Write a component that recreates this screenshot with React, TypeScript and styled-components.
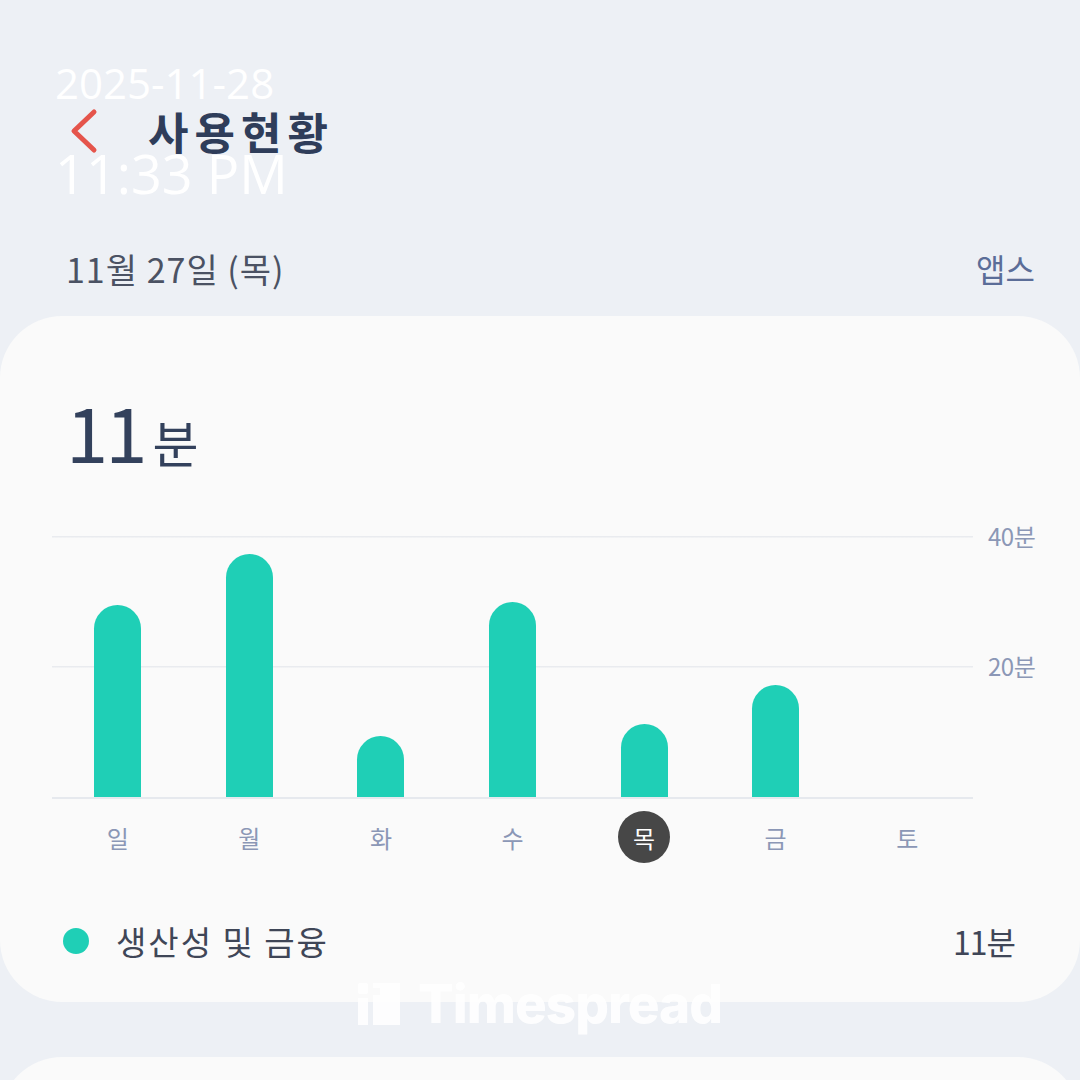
import React from 'react'
import styled, { createGlobalStyle } from 'styled-components'

const GlobalStyle = createGlobalStyle`
  html, body {
    margin: 0;
    padding: 0;
    background: #edf0f5;
  }
  body {
    font-family: "Noto Sans CJK KR", "Noto Sans", sans-serif;
  }
`

const Screen = styled.div`
  position: relative;
  width: 1080px;
  height: 1080px;
  overflow: hidden;
  background: #edf0f5;
`

const Stamp = styled.div`
  position: absolute;
  top: 62px;
  left: 55px;
  font-family: "Open Sans", sans-serif;
  color: #ffffff;
  line-height: 1;
  z-index: 2;
`

const StampLine = styled.div<{ $size: number; $gap?: number }>`
  font-size: ${p => p.$size}px;
  margin-top: ${p => p.$gap || 0}px;
`

const Header = styled.header`
  display: flex;
  align-items: center;
  height: 70px;
  margin-top: 96px;
  padding-left: 68px;
`

const Title = styled.h1`
  margin: 0 0 0 48px;
  font-size: 44px;
  font-weight: 700;
  color: #2f3d5a;
  letter-spacing: 6px;
`

const DateRow = styled.div`
  display: flex;
  align-items: center;
  justify-content: space-between;
  height: 50px;
  margin-top: 77px;
  padding: 0 45px 0 66px;
`

const DateText = styled.span`
  font-size: 34px;
  color: #4b5263;
  letter-spacing: 1px;
`

const AppsLink = styled.span`
  font-size: 32px;
  color: #5b6d98;
`

const Card = styled.section`
  margin-top: 23px;
  background: #fafafa;
  border-radius: 62px;
  padding: 76px 40px 36px 52px;
`

const Total = styled.div`
  display: flex;
  align-items: baseline;
  height: 76px;
  line-height: 1;
  color: #33415c;
  padding-left: 14px;
`

const TotalNum = styled.span`
  font-size: 76px;
  font-weight: 400;
  letter-spacing: -3px;
`

const TotalUnit = styled.span`
  font-size: 50px;
  margin-left: 8px;
`

const Chart = styled.div`
  display: grid;
  grid-template-columns: 921px 1fr;
  margin-top: 68px;
`

const Plot = styled.div`
  height: 261px;
  display: grid;
  grid-template-columns: repeat(7, 1fr);
  align-items: end;
  border-bottom: 2px solid #e6e9ee;
  background:
    linear-gradient(#e9ebef, #e9ebef) 0 0 / 100% 1.5px no-repeat,
    linear-gradient(#e9ebef, #e9ebef) 0 130px / 100% 1.5px no-repeat;
`

const BarSlot = styled.div`
  display: flex;
  justify-content: center;
`

const Bar = styled.div`
  width: 47px;
  background: #1fcfb6;
  border-radius: 24px 24px 0 0;
`

const Axis = styled.div`
  display: flex;
  flex-direction: column;
  justify-content: space-between;
  height: 290px;
  margin: -15px 0 -15px;
  padding-left: 15px;
`

const AxisLabel = styled.span`
  height: 30px;
  line-height: 30px;
  font-size: 24px;
  color: #8b97b6;
  letter-spacing: -0.5px;
`

const Days = styled.div`
  display: grid;
  grid-template-columns: repeat(7, 1fr);
  width: 921px;
  height: 76px;
  align-items: center;
`

const Day = styled.div<{ $active?: boolean }>`
  justify-self: center;
  width: 52px;
  height: 52px;
  border-radius: 50%;
  display: flex;
  align-items: center;
  justify-content: center;
  font-size: 24px;
  color: ${p => (p.$active ? '#ffffff' : '#8b97b6')};
  background: ${p => (p.$active ? '#474747' : 'transparent')};
`

const Legend = styled.div`
  display: flex;
  align-items: center;
  height: 50px;
  margin-top: 41px;
  padding: 0 25px 0 11px;
`

const Dot = styled.span`
  width: 26px;
  height: 26px;
  border-radius: 50%;
  background: #1fcfb6;
`

const LegendName = styled.span`
  margin-left: 27px;
  font-size: 33px;
  color: #3f4657;
  letter-spacing: 2px;
  flex: 1;
`

const LegendValue = styled.span`
  font-size: 32px;
  color: #3f4657;
  letter-spacing: -1px;
`

const NextCard = styled.section`
  margin-top: 55px;
  height: 200px;
  background: #fafafa;
  border-radius: 62px;
`

const Watermark = styled.div`
  position: absolute;
  top: 972px;
  left: 0;
  right: 0;
  display: flex;
  justify-content: center;
  align-items: center;
  gap: 18px;
  z-index: 2;
  opacity: 0.9;
`

const WatermarkText = styled.span`
  font-family: Inter, "Liberation Sans", sans-serif;
  font-weight: 800;
  font-size: 53px;
  letter-spacing: -1px;
  color: #ffffff;
`

const days = ['일', '월', '화', '수', '목', '금', '토']
const minutes = [29.5, 37.4, 9.4, 30, 11.2, 17.2, 0]
const ACTIVE = 4
const PX_PER_MIN = 130 / 20

const BackIcon = () => (
  <svg width="32" height="46" viewBox="0 0 32 46">
    <polyline points="26,4 6,23 26,42" fill="none" stroke="#e5544b" strokeWidth="5" strokeLinecap="round" strokeLinejoin="round" />
  </svg>
)

const LogoIcon = () => (
  <svg width="42" height="42" viewBox="0 0 42 42">
    <rect x="0" y="0" width="10" height="11" rx="2" fill="#fff" />
    <rect x="0" y="15" width="10" height="27" fill="#fff" />
    <path d="M15 0 H42 V42 H15 V12 H22 V5 H15 Z" fill="#fff" />
  </svg>
)

const App = () => (
  <Screen>
    <GlobalStyle />
    <Stamp>
      <StampLine $size={42}>2025-11-28</StampLine>
      <StampLine $size={54} $gap={42}>11:33 PM</StampLine>
    </Stamp>
    <Header>
      <BackIcon />
      <Title>사용현황</Title>
    </Header>
    <DateRow>
      <DateText>11월 27일 (목)</DateText>
      <AppsLink>앱스</AppsLink>
    </DateRow>
    <Card>
      <Total>
        <TotalNum>11</TotalNum>
        <TotalUnit>분</TotalUnit>
      </Total>
      <Chart>
        <Plot>
          {minutes.map((m, i) => (
            <BarSlot key={i}>
              {m > 0 && <Bar style={{ height: `${m * PX_PER_MIN}px` }} />}
            </BarSlot>
          ))}
        </Plot>
        <Axis>
          <AxisLabel>40분</AxisLabel>
          <AxisLabel>20분</AxisLabel>
          <AxisLabel />
        </Axis>
      </Chart>
      <Days>
        {days.map((d, i) => (
          <Day key={d} $active={i === ACTIVE}>{d}</Day>
        ))}
      </Days>
      <Legend>
        <Dot />
        <LegendName>생산성 및 금융</LegendName>
        <LegendValue>11분</LegendValue>
      </Legend>
    </Card>
    <NextCard />
    <Watermark>
      <LogoIcon />
      <WatermarkText>Timespread</WatermarkText>
    </Watermark>
  </Screen>
)

export default App
